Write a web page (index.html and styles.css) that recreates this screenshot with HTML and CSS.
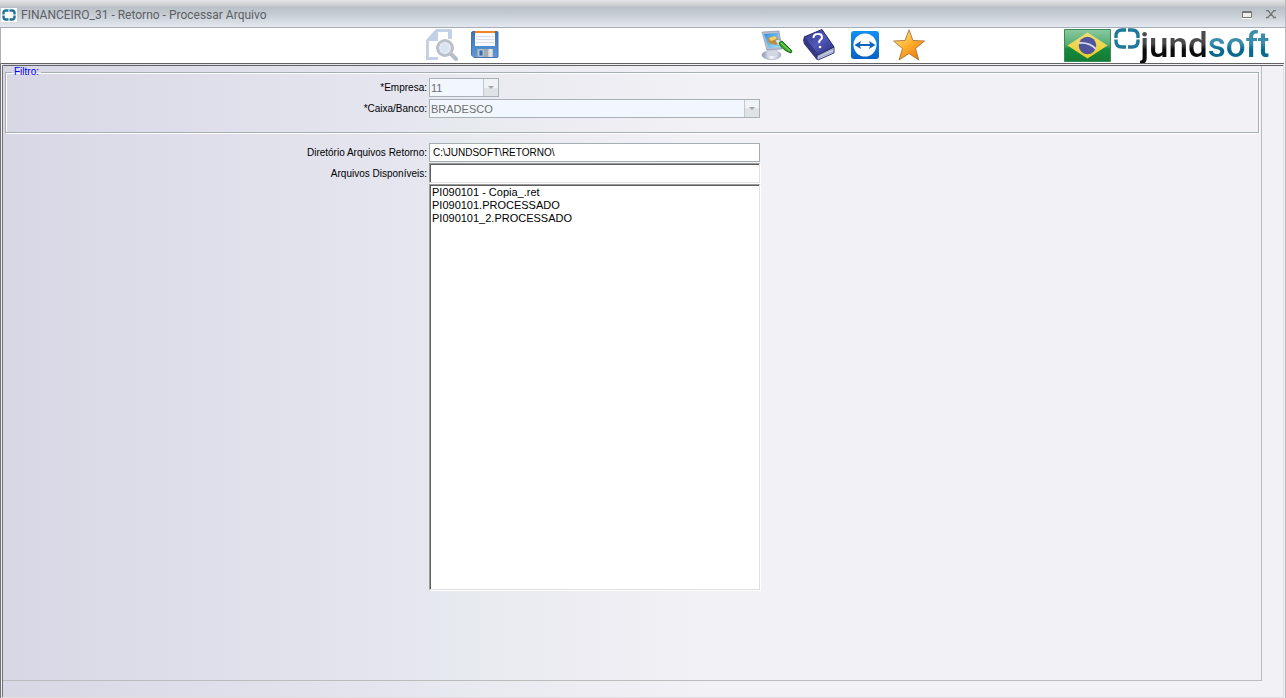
FILE: index.html
```html
<!DOCTYPE html>
<html lang="pt-BR">
<head>
<meta charset="utf-8">
<title>FINANCEIRO_31 - Retorno - Processar Arquivo</title>
<link rel="stylesheet" href="styles.css">
</head>
<body>
<div class="window">
  <header class="titlebar">
    <svg class="app-icon" viewBox="0 0 16 14" aria-hidden="true"><path fill="#fff" d="M0 0h16v14H0z"/><path d="M7.500 2.500H5Q2.500 2.500 2.500 5v1.500M2.500 7.500V9q0 2.500 2.500 2.500h2.500M8.500 2.500H11q2.500 0 2.500 2.500v1.500M13.500 7.500V9q0 2.500-2.500 2.500H8.500" fill="none" stroke="#217497" stroke-width="2.400"/></svg>
    <h1 class="title">FINANCEIRO_31 - Retorno - Processar Arquivo</h1>
    <button class="win-button" aria-label="Maximizar"><svg width="10" height="8" viewBox="0 0 10 8"><path d="M.5 .5h9v6h-9zM0 1.500h10" fill="#eee" stroke="#777"/><path d="M0 7.500h10" stroke="#fff"/></svg></button>
    <button class="win-button" aria-label="Fechar"><svg width="10" height="9" viewBox="0 0 10 9"><path d="M0 .5h3M7 .5h3M0 7.500h3M7 7.500h3M2 .5l6 7M8 .5l-6 7" fill="none" stroke="#777" stroke-width="1.300"/></svg></button>
  </header>

  <div class="toolbar">
    <div class="tools tools-main">
      <button class="tool" disabled aria-label="Visualizar">
        <svg width="32" height="32" viewBox="0 0 32 32"><path d="M11 1.500h13V10M1.500 12v17.500H12" fill="none" stroke="#c5d2e6" stroke-width="3"/><path d="M0 11 10 0h2v12H0zM22 0h2q2 0 2 2v8h-4z" fill="#c3d1e6"/><path d="m25 25 5 5" stroke="#b6bec9" stroke-width="4" stroke-linecap="round"/><circle cx="19" cy="19" r="7.500" fill="#e5ebf5" stroke="#b9c0c9" stroke-width="3"/><circle cx="19" cy="19" r="4" fill="#d8e2f1"/></svg>
      </button>
      <button class="tool" aria-label="Salvar">
        <svg width="28" height="28" viewBox="0 0 28 28"><defs><linearGradient id="disk" x2="0" y2="1"><stop stop-color="#3674b6"/><stop offset="1" stop-color="#5d99db"/></linearGradient></defs><path d="M2 .5h24q1 0 1 1v24q0 1-1 1H3l-2.500-2.500V2Q.5.5 2 .5z" fill="url(#disk)" stroke="#4672ae"/><path d="M4 1h20v14H4z" fill="#f8faff"/><path d="M4 0h20v2H4z" fill="#f08424"/><path d="M5 5.500h18M5 8.500h18M5 11.500h18" stroke="#d9dde7"/><path d="M6 18h16v8H6z" fill="#c8cacd"/><path d="M6 18h11v8H6z" fill="#9facb5"/><path d="M8 19h4v6H8z" fill="#376da9" stroke="#eceef0" stroke-width=".6"/><path d="M18 18h3v8h-3z" fill="#e4e0da"/></svg>
      </button>
    </div>
    <div class="tools tools-help">
      <button class="tool" aria-label="Aparência">
        <svg width="32" height="32" viewBox="0 0 32 32"><defs><linearGradient id="screen" x2="1" y2="1"><stop stop-color="#338bde"/><stop offset="1" stop-color="#a0e6ff"/></linearGradient><linearGradient id="base" x2="1"><stop stop-color="#8992b0"/><stop offset=".5" stop-color="#f8f9fc"/><stop offset="1" stop-color="#adb3ca"/></linearGradient></defs><ellipse cx="10.500" cy="26" rx="9.500" ry="4.500" fill="url(#base)" stroke="#a1a5ba" stroke-width=".7"/><path d="m5 19 12 2-1 6H7z" fill="#d3d6e3"/><path d="m1 3 17-1 3 18-15 1z" fill="#b5bfce" stroke="#7a879f" stroke-width=".6"/><path d="m3 5 14-1 2 14-11 1z" fill="url(#screen)"/><path d="m7 9 7-2 5 5-4 4-7-2z" fill="#c28b34"/><path d="m8 9 6-2 2 3-6 2z" fill="#f4d16a"/><path d="m14 11 4-1 3 4-4 3z" fill="#d8e2e4" stroke="#657177" stroke-width=".5"/><path d="m18 14 3-2 10 10-1 2q-9-3-12-10z" fill="#38a72c" stroke="#17681b"/><path d="m20 14 9 8" stroke="#8be56b"/></svg>
      </button>
      <button class="tool" aria-label="Ajuda">
        <svg width="32" height="32" viewBox="0 0 32 32"><defs><linearGradient id="book" x2="1" y2="1"><stop stop-color="#353a8f"/><stop offset=".5" stop-color="#5158ba"/><stop offset="1" stop-color="#282b79"/></linearGradient></defs><path d="m1 9 1 5 13 17 16-7v-6l-16 7z" fill="#c9cee6" stroke="#3b407d"/><path d="m15 27 15-7M15 29l15-6" stroke="#8c93ae" stroke-width=".7"/><path d="M1 8 19 .5 31 18l-16 8z" fill="url(#book)" stroke="#252a6b"/><path d="m1 9-1 2 1 4 13 16 1-5z" fill="#33377f"/><path d="M10.500 9q0-4 4-4 4-.5 4.500 2.500.3 2-1.500 3.300-2 1.300-1 3.200" fill="none" stroke="#fff" stroke-width="2"/><circle cx="17" cy="18" r="1.300" fill="#fff"/></svg>
      </button>
      <button class="tool" aria-label="Acesso remoto">
        <svg width="28" height="28" viewBox="0 0 28 28"><defs><linearGradient id="remote" x2="0" y2="1"><stop stop-color="#138ff0"/><stop offset="1" stop-color="#0861c5"/></linearGradient></defs><rect width="28" height="28" rx="3" fill="url(#remote)"/><circle cx="14" cy="14" r="11.500" fill="#fff"/><path d="m3.500 14 6.500-4-1 3h10l-1-3 6.500 4-6.500 4 1-3H9l1 3z" fill="#0c65bd"/></svg>
      </button>
      <button class="tool" aria-label="Favoritos">
        <svg width="32" height="32" viewBox="0 0 32 32"><defs><linearGradient id="star" x2=".7" y2="1"><stop stop-color="#fff0a6"/><stop offset=".5" stop-color="#ffb735"/><stop offset="1" stop-color="#ee7b08"/></linearGradient></defs><path d="m16 .8 4 10.700 11.500.5-9 7.500 3.200 11.500L16 24.500 6 31l3.500-11.500L.7 12l11.300-.5z" fill="url(#star)" stroke="#a9733b" stroke-width=".9"/></svg>
      </button>
    </div>
    <div class="brand">
      <svg width="47" height="33" viewBox="0 0 47 33" role="img" aria-label="Brasil"><defs><linearGradient id="flag" x2="0" y2="1"><stop stop-color="#8ac99f"/><stop offset=".48" stop-color="#56ac72"/><stop offset=".6" stop-color="#168a3c"/><stop offset="1" stop-color="#137a35"/></linearGradient><linearGradient id="diamond" x2="0" y2="1"><stop stop-color="#f2df75"/><stop offset="1" stop-color="#ebcd22"/></linearGradient></defs><path d="M.5.5h46v32H.5z" fill="url(#flag)" stroke="#3b8a56"/><path d="m23.500 3.500 20 13-20 13-20-13z" fill="url(#diamond)"/><circle cx="23.500" cy="16.500" r="8.700" fill="#51549c"/><path d="M15 14q10-1 17 6" fill="none" stroke="#d3d9e8" stroke-width="1.800"/></svg>
      <span class="logo">
        <svg width="26" height="21" viewBox="0 0 26 21" aria-hidden="true"><path d="M12 2H8Q2 2 2 8v2M2 11.500V13q0 6 6 6h4M14 2h4q6 0 6 6v2M24 11.500V13q0 6-6 6h-4" fill="none" stroke="#20799c" stroke-width="3.400"/></svg>
        <span class="wordmark"><span class="wordmark-dark">jund</span><span class="wordmark-blue">soft</span></span>
      </span>
    </div>
  </div>

  <main class="body">
    <div class="panel">
      <fieldset class="filter">
        <legend>Filtro:</legend>
        <div class="row">
          <label for="empresa">*Empresa:</label>
          <span class="combo combo-small"><select id="empresa" disabled><option>11</option></select></span>
        </div>
        <div class="row">
          <label for="banco">*Caixa/Banco:</label>
          <span class="combo"><select id="banco" disabled><option>BRADESCO</option></select></span>
        </div>
      </fieldset>
      <div class="files">
        <div class="row">
          <label for="diretorio">Diretório Arquivos Retorno:</label>
          <input class="field" id="diretorio" type="text" value="C:\JUNDSOFT\RETORNO\">
        </div>
        <div class="row">
          <label for="disponiveis">Arquivos Disponíveis:</label>
          <input class="field sunken" id="disponiveis" type="text">
        </div>
        <div class="row">
          <select class="list sunken" size="20" aria-label="Arquivos">
            <option>PI090101 - Copia_.ret</option>
            <option>PI090101.PROCESSADO</option>
            <option>PI090101_2.PROCESSADO</option>
          </select>
        </div>
      </div>
    </div>
  </main>
</div>
</body>
</html>
```
FILE: styles.css
```css
* { box-sizing: border-box; }

body {
  margin: 0;
  font-family: "Liberation Sans", Arial, sans-serif;
  font-size: 10px;
  color: #000;
}

button { border: 0; padding: 0; background: none; }
svg { display: block; }

.window {
  display: flex;
  flex-direction: column;
  min-height: 100vh;
  border-right: 1px solid #b8b8bc;
  background: #f2f1f6;
}

.titlebar {
  display: flex;
  align-items: center;
  gap: 4px;
  height: 28px;
  padding: 2px 4px 0 1px;
  border-bottom: 1px solid #a6adb6;
  background: linear-gradient(#e4e4e6 0, #c9cacd 6px, #b9c0c7 7px, #c5cbd1 14px, #e4e9f1 27px);
}

.app-icon { width: 16px; height: 14px; }

.title {
  flex: 1;
  margin: 0;
  font: 400 12px/16px Roboto, "Open Sans", sans-serif;
  color: #5c6066;
}

.win-button { display: grid; place-items: center; width: 20px; height: 16px; }

.toolbar {
  display: grid;
  grid-template-columns: 425fr 336fr 303fr 221fr;
  align-items: center;
  height: 35px;
  border-left: 1px solid #b0b0b4;
  background: #fff;
}

.tools { display: flex; align-items: center; padding-bottom: 1px; }
.tools-main { grid-column: 2; gap: 13px; }
.tools-help { grid-column: 3; gap: 14px; }
.tools-help .tool:first-child { margin-right: -4px; }
.tools-help .tool:nth-child(2) { margin-right: 2px; }

.brand { display: flex; align-items: center; gap: 3px; }
.logo { display: flex; align-items: flex-start; }
.wordmark { font: 500 35px/35px Roboto, sans-serif; }
.wordmark-dark {
  color: transparent;
  background: linear-gradient(#4a4a4a 45%, #0b0b0b 60%);
  background-clip: text;
}
.wordmark-blue {
  color: transparent;
  background: linear-gradient(#3a8cab 45%, #096990 60%);
  background-clip: text;
}

.body {
  display: flex;
  flex: 1;
  margin-right: 1px;
  border: 1px solid #e0e0e2;
  border-top: 3px double #626262;
  border-left: 3px double #707070;
  background: linear-gradient(90deg, #d8d7e5 0, #e6e6f0 32%, #e6eaee 35%, #eeedf3 46%, #f2f1f6 55%);
}

.panel {
  flex: 1;
  margin: 0 21px 16px 0;
  border-right: 1px solid #bcbcc2;
  border-bottom: 1px solid #bcbcbc;
}

.filter {
  min-width: 0;
  min-height: 67px;
  margin: 0 2px;
  padding: 0;
  border: 1px solid #a5aeb5;
  box-shadow: 1px 1px 0 #fff, inset 1px 1px 0 #fff;
}

.filter legend {
  margin-left: 6px;
  padding: 0 2px;
  font-size: 10px;
  line-height: 12px;
  color: #00f;
}

.files { display: grid; gap: 1px; padding: 10px 3px 0; }

.row {
  display: grid;
  grid-template-columns: 421fr 331fr 496fr;
  column-gap: 2px;
  align-items: center;
}

.filter .row { align-items: start; min-height: 21px; }
.row label { text-align: right; line-height: 19px; }
.row .list { grid-column: 2; }

.combo {
  display: grid;
  position: relative;
  height: 19px;
}
.combo-small { width: 70px; }

.combo select {
  width: 100%;
  height: 19px;
  padding: 0 16px 0 1px;
  border: 1px solid #a9b0b8;
  border-radius: 0;
  appearance: none;
  background: #f2f7fd;
  font: 11px "Liberation Sans", Arial, sans-serif;
  color: #6d6d6d;
  opacity: 1;
}

.combo::before {
  content: "";
  position: absolute;
  inset: 1px 1px 1px auto;
  width: 14px;
  border-left: 1px solid #c1c8cf;
  background: linear-gradient(#f0f3f5 50%, #dfe3e6 50%);
}

.combo::after {
  content: "";
  position: absolute;
  top: 8px;
  right: 5px;
  border: solid transparent;
  border-width: 3px 3px 0;
  border-top-color: #a4a4a8;
}

.field {
  width: 100%;
  height: 19px;
  padding: 0 3px;
  border: 1px solid #a5adb5;
  background: #fff;
  font: inherit;
}

.sunken {
  height: 20px;
  border: 1px solid;
  border-color: #9b9b9b #e0e0e2 #e0e0e2 #9b9b9b;
  box-shadow: inset 1px 1px 0 #606060, 1px 1px 0 #fff;
}

.list {
  width: 100%;
  height: 406px;
  padding: 1px;
  border-radius: 0;
  background: #fff;
  font: 11px/13px "Liberation Sans", Arial, sans-serif;
  color: #000;
  overflow: hidden;
}

.list option { height: 13px; min-height: 13px; padding: 0 1px; }
```
